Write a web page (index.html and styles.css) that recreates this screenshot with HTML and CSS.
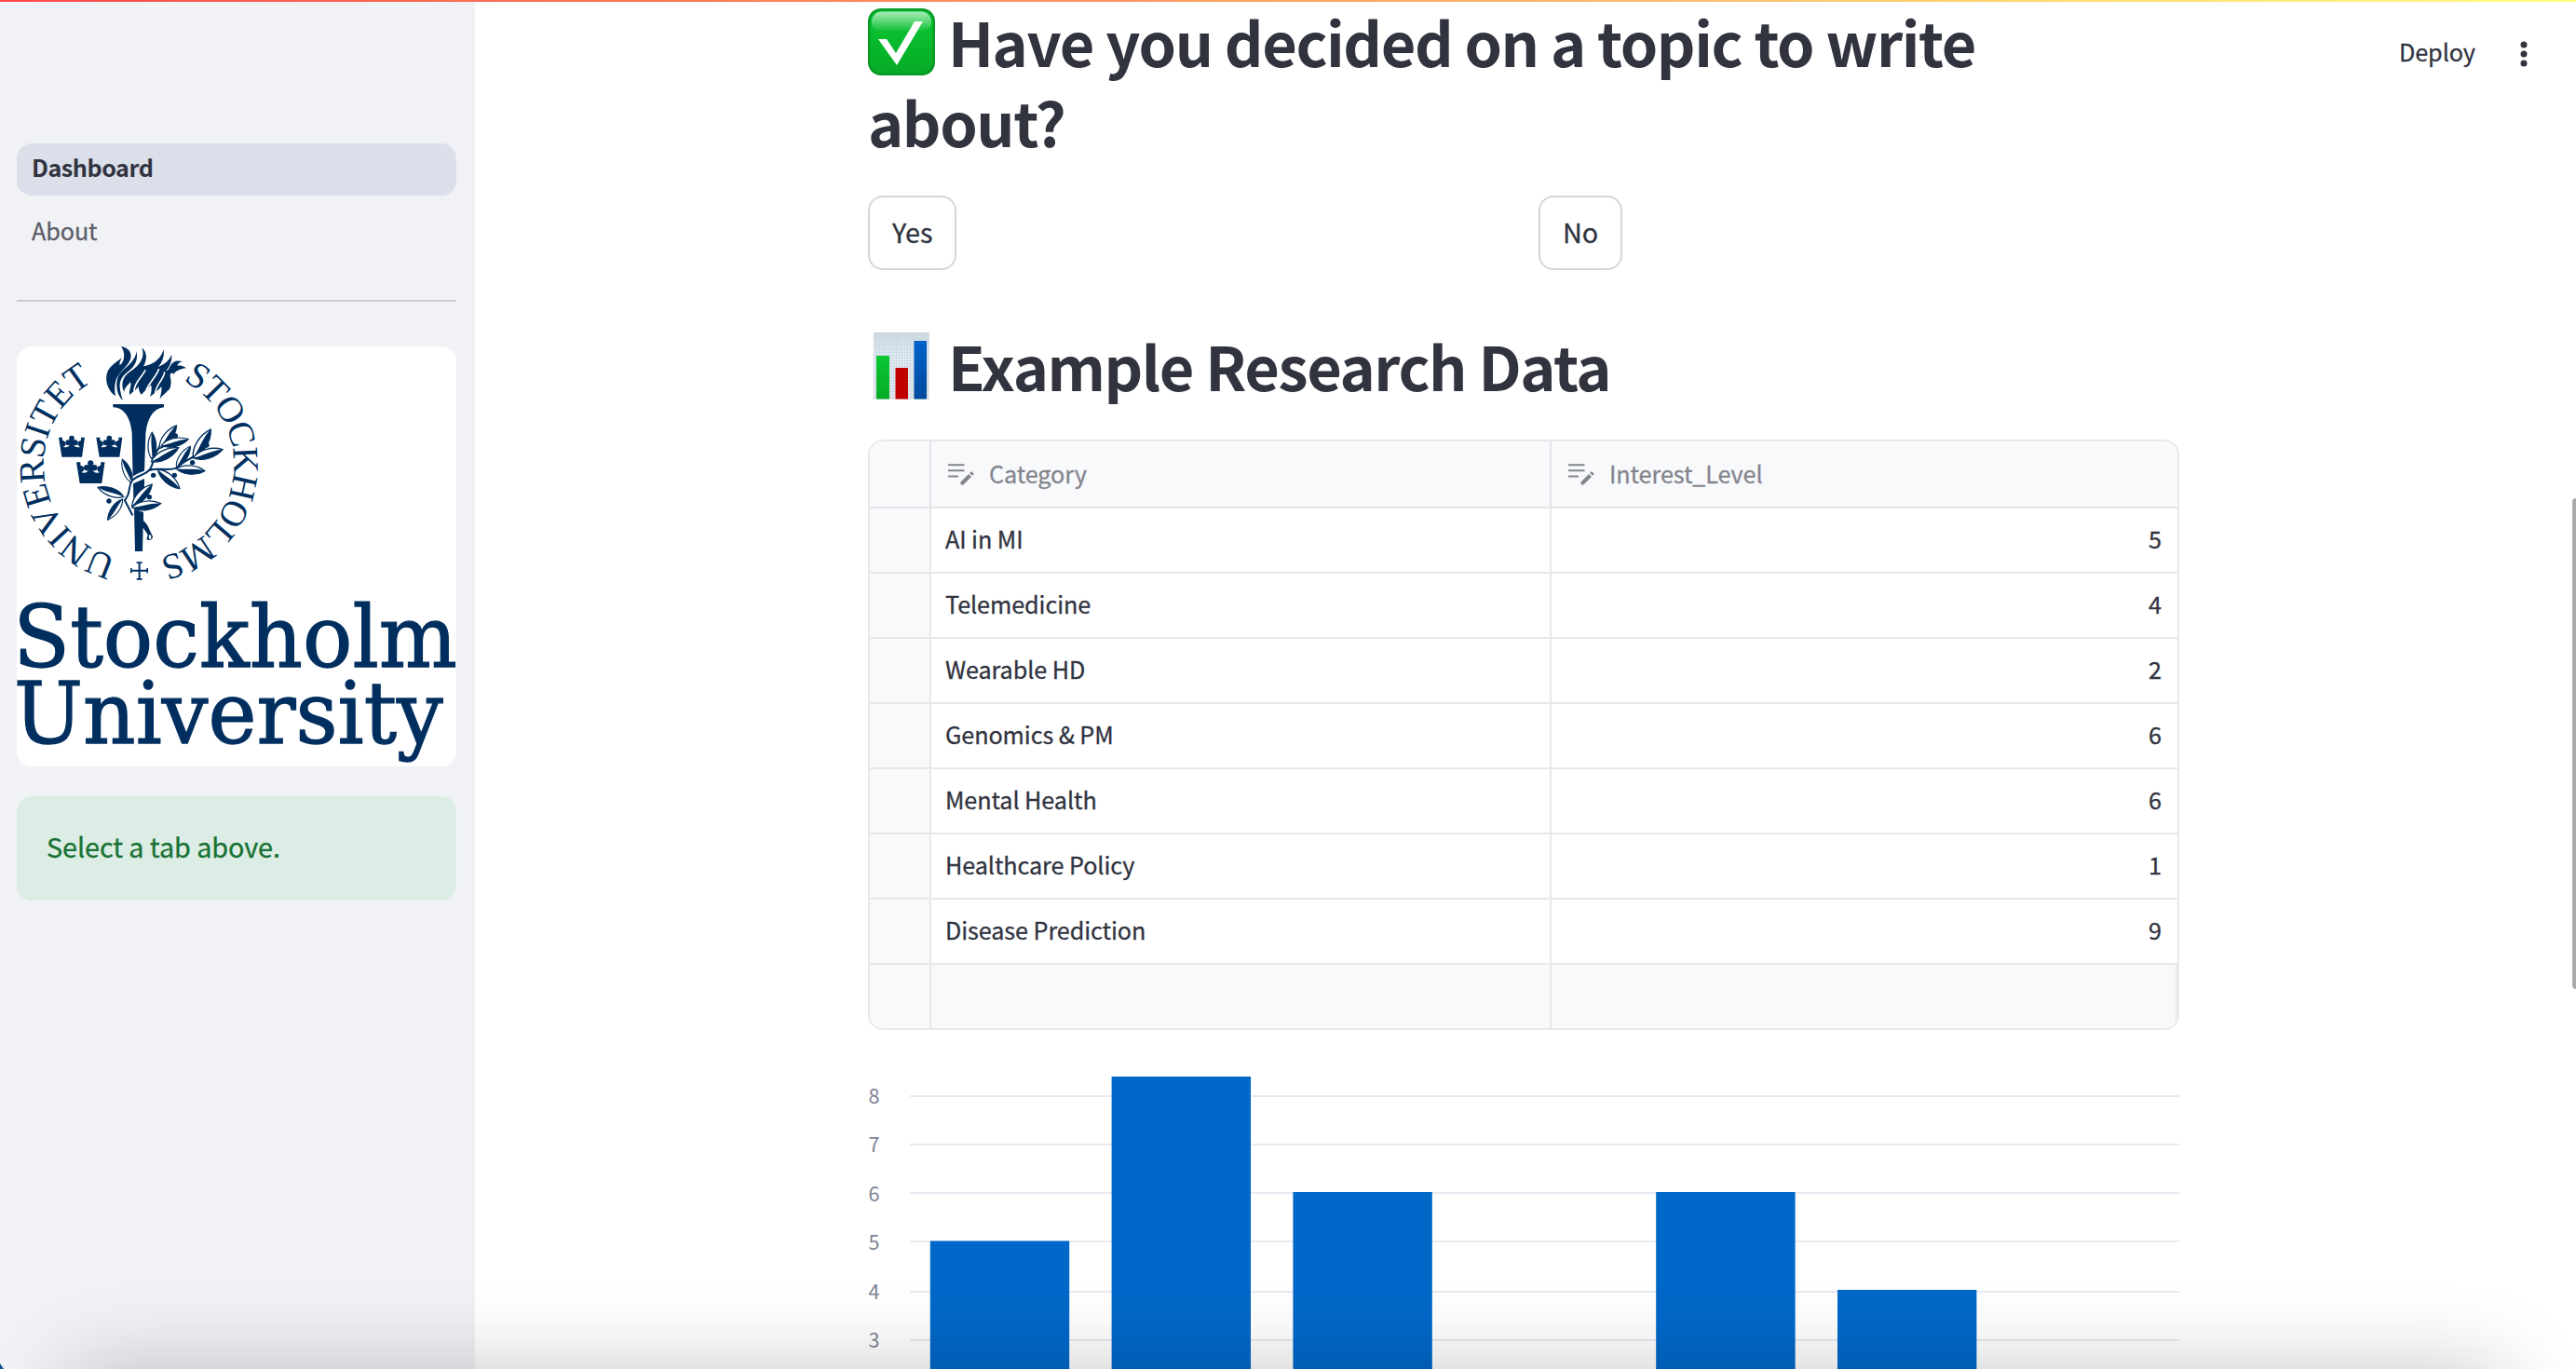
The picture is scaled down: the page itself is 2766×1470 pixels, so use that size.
FILE: index.html
```html
<!DOCTYPE html>
<html lang="en">
<head>
<meta charset="utf-8">
<title>Dashboard</title>
<link rel="stylesheet" href="styles.css">
</head>
<body>
<svg width="0" height="0" class="defs" aria-hidden="true">
  <defs>
    <symbol id="edit-note" viewBox="0 0 28 23">
      <path d="M0 1.300h17.500M0 7.300h17.500M0 13.400h11" fill="none" stroke="currentColor" stroke-width="2"/>
      <path d="M13.500 22.500v-2.900l8.600-8.600 2.900 2.900-8.600 8.600zM23.200 9.900l1.300-1.300q.5-.5 1 0l1.900 1.900q.5.500 0 1l-1.300 1.300z" fill="currentColor"/>
    </symbol>
    <g id="leaf">
      <path d="M0 0C25-20 70-20 100 0C70 20 25 20 0 0Z" fill="#fff" stroke="#002f5f" stroke-width="4"/>
      <path d="M2 0C30 2 70-8 100 0C70 20 25 20 2 0Z" fill="#002f5f"/>
    </g>
    <g id="crown" fill="#002f5f">
      <path d="M0 5H12V15C24 16 26 30 14 35C24 39 34 36 36 28H48C50 36 60 39 70 35C58 30 60 16 72 15V5H84L75 68H10Z"/>
      <circle cx="42" cy="8" r="8.500"/><circle cx="31" cy="22" r="9"/><circle cx="53" cy="22" r="9"/>
      <circle cx="14" cy="26" r="8"/><circle cx="70" cy="26" r="8"/><path d="M37 12h10v22H37z"/>
    </g>
    <linearGradient id="green" x1="0" y1="0" x2="0" y2="1"><stop offset="0" stop-color="#08c833"/><stop offset="1" stop-color="#08ab26"/></linearGradient>
    <linearGradient id="gloss" x1="0" y1="0" x2="0" y2="1"><stop offset="0" stop-color="#fff" stop-opacity=".65"/><stop offset="1" stop-color="#fff" stop-opacity="0"/></linearGradient>
    <linearGradient id="blue" x1="0" y1="0" x2="0" y2="1"><stop offset="0" stop-color="#0062cc"/><stop offset="1" stop-color="#004a9c"/></linearGradient>
    <linearGradient id="paper" x1="0" y1="0" x2="0" y2="1"><stop offset="0" stop-color="#d3dbe1"/><stop offset=".3" stop-color="#e0ebf3"/><stop offset="1" stop-color="#e6e8ea"/></linearGradient>
    <pattern id="mesh" width="3" height="3" patternUnits="userSpaceOnUse"><path d="M0 .5h3M.5 0v3" stroke="#b9cbd9" stroke-opacity=".4" stroke-width="1"/></pattern>
  </defs>
</svg>

<div class="app">
  <aside class="sidebar">
    <nav class="nav">
      <a class="nav-item active">Dashboard</a>
      <a class="nav-item">About</a>
    </nav>
    <hr class="rule">
    <svg class="logo" viewBox="54 66 1416 1353" role="img" aria-label="Stockholm University">
      <defs>
        <path id="ring" d="M447 753A306 306 0 0 1 447 141A306 306 0 0 1 447 753"/>
        <path id="ring-right" d="M447 141A306 306 0 0 1 447 753"/>
      </defs>
      <g class="seal">
        <text><textPath href="#ring" startOffset="72" textLength="735" lengthAdjust="spacing">UNIVERSITET</textPath></text>
        <text><textPath href="#ring-right" startOffset="148" textLength="746" lengthAdjust="spacing">STOCKHOLMS</textPath></text>
      </g>
      <g fill="#002f5f">
        <path d="M390 66C420 70 430 95 415 118C400 140 378 155 372 180C368 200 370 212 372 226C350 210 338 180 344 155C350 130 372 120 392 102C386 115 384 122 386 126C400 118 406 88 390 66Z"/>
        <path d="M440 82C445 110 435 130 415 145C395 160 385 175 386 195C387 215 392 228 396 240C378 225 372 195 378 170C385 145 410 135 425 115C433 104 438 95 440 82Z"/>
        <path d="M457 70C475 85 474 110 462 130C500 125 520 100 527 76C530 100 522 118 510 132C530 122 545 112 553 92C555 115 545 130 535 145C548 140 545 125 560 116C570 110 580 113 588 114C575 118 572 124 572 128C582 126 590 128 600 136C582 138 565 145 560 155C552 148 548 152 548 162C552 178 552 195 545 205C535 215 525 222 515 235C518 220 522 205 520 195C512 205 500 215 483 228C488 215 490 200 486 188C475 205 462 212 455 222C450 212 445 205 447 195C438 205 425 215 418 222C414 205 425 195 420 180C415 190 402 195 400 212C388 190 395 165 415 150C445 132 470 105 457 70Z"/>
        <path d="M364 252H528V262C490 266 472 305 469 355L465 475L428 500L425 345C420 295 400 263 364 262Z"/>
        <path d="M429 508L465 492V520L430 560ZM432 590L462 600V627C478 640 480 655 492 678C492 690 480 692 472 688L476 672L461 650L459 726H435Z"/>
        <path d="M440 760H458V765H452V785H472V780H477V796H472V791H452V813H458V818H440V813H446V791H425V796H420V780H425V785H446V765H440Z"/>
        <use href="#crown" x="189" y="354"/><use href="#crown" x="310" y="354"/>
        <use href="#crown" transform="translate(246 433) scale(1.09)"/>
      </g>
      <g fill="none" stroke="#fff" stroke-width="5">
        <path d="M466 226C468 190 502 170 512 138M500 222C498 190 530 172 530 148M432 210C432 180 462 160 468 142"/>
      </g>
      <ellipse cx="483" cy="680" rx="4" ry="7" fill="#fff"/>
      <g fill="none" stroke-linecap="round">
        <path d="M402 562L412 545C420 520 417 508 424 500C440 480 465 482 480 465" stroke="#fff" stroke-width="17"/>
        <path d="M426 608L402 562L412 545C420 520 417 508 424 500C440 480 465 482 480 465C492 455 492 435 497 420C505 400 512 392 520 380M480 465C510 455 540 468 568 458C590 436 610 430 628 418" stroke="#002f5f" stroke-width="6"/>
      </g>
      <use href="#leaf" transform="translate(490 430) rotate(-90) scale(.87)"/>
      <use href="#leaf" transform="translate(513 395) rotate(-53.300) scale(.93)"/>
      <use href="#leaf" transform="translate(520 385) rotate(-13) scale(.89)"/>
      <use href="#leaf" transform="translate(487 437) rotate(-27) scale(.99)"/>
      <use href="#leaf" transform="translate(622 425) rotate(-58.200) scale(1.08)"/>
      <use href="#leaf" transform="translate(622 425) rotate(-15.900) scale(.99)"/>
      <use href="#leaf" transform="translate(568 455) rotate(-56) scale(.81)"/>
      <use href="#leaf" transform="translate(568 460) rotate(4.400) scale(.92)"/>
      <use href="#leaf" transform="translate(508 462) rotate(41) scale(.94)"/>
      <use href="#leaf" transform="translate(424 505) rotate(-111.800) scale(.81)"/>
      <use href="#leaf" transform="translate(398 550) rotate(-160) scale(.88)"/>
      <use href="#leaf" transform="translate(395 558) rotate(126) scale(.82)"/>
      <use href="#leaf" transform="translate(425 580) rotate(-47) scale(.95)"/>
      <use href="#leaf" transform="translate(425 585) rotate(-8) scale(.94)"/>
      <g fill="#002f5f">
        <circle cx="565" cy="354" r="8"/><circle cx="666" cy="384" r="8"/><circle cx="620" cy="440" r="8"/><circle cx="562" cy="481" r="8"/>
        <circle cx="494" cy="481" r="8"/><circle cx="481" cy="551" r="8"/><circle cx="351" cy="564" r="8"/>
      </g>
      <g class="wordmark">
        <text x="43" y="1098" textLength="1430" lengthAdjust="spacingAndGlyphs">Stockholm</text>
        <text x="45" y="1344" textLength="1382" lengthAdjust="spacingAndGlyphs">University</text>
      </g>
    </svg>
    <div class="alert">Select a tab above.</div>
  </aside>

  <main class="main">
    <h1 class="heading first"><svg class="emoji" viewBox="0 0 72 72"><rect width="72" height="72" rx="14" fill="#079a26"/><rect x="2.500" y="2.500" width="67" height="67" rx="12" fill="url(#green)"/><rect x="4" y="3.500" width="64" height="22" rx="11" fill="url(#gloss)"/><path d="M11 33H20L30 48L50 14H59L31 61Z" fill="#fff"/></svg><span>Have you decided on a topic to write</span><br><span>about?</span></h1>
    <div class="choices">
      <div><button class="button">Yes</button></div>
      <div><button class="button">No</button></div>
    </div>
    <h1 class="heading second"><svg class="emoji" viewBox="0 0 72 72"><rect x="6" width="60" height="72" fill="url(#paper)"/><rect x="6" width="60" height="72" fill="url(#mesh)"/><rect x="9" y="25" width="14" height="46.500" fill="url(#green)"/><rect x="29.500" y="38" width="13.500" height="33.500" fill="#c00000"/><rect x="49.500" y="9" width="13.500" height="62.500" fill="url(#blue)"/></svg><span>Example Research Data</span></h1>

    <div class="table">
      <div class="row head"><div></div><div><svg class="edit"><use href="#edit-note"/></svg><span>Category</span></div><div><svg class="edit"><use href="#edit-note"/></svg><span>Interest_Level</span></div></div>
      <div class="row"><div></div><div>AI in MI</div><div>5</div></div>
      <div class="row"><div></div><div>Telemedicine</div><div>4</div></div>
      <div class="row"><div></div><div>Wearable HD</div><div>2</div></div>
      <div class="row"><div></div><div>Genomics &amp; PM</div><div>6</div></div>
      <div class="row"><div></div><div>Mental Health</div><div>6</div></div>
      <div class="row"><div></div><div>Healthcare Policy</div><div>1</div></div>
      <div class="row"><div></div><div>Disease Prediction</div><div>9</div></div>
      <div class="row blank"><div></div><div></div><div></div></div>
    </div>

    <svg class="chart" viewBox="932 1150 1408 320">
      <path d="M977 1177H2340M977 1229H2340M977 1281H2340M977 1333H2340M977 1387H2340M977 1439H2340" stroke="#e6eaf1" stroke-width="2"/>
      <g class="ticks">
        <text x="932.500" y="1185">8</text><text x="932.500" y="1237">7</text><text x="932.500" y="1290">6</text>
        <text x="932.500" y="1342">5</text><text x="932.500" y="1395">4</text><text x="932.500" y="1447">3</text>
      </g>
      <g fill="#0068c9">
        <rect x="998.800" y="1332.500" width="149.400" height="140"/>
        <rect x="1193.600" y="1156" width="149.400" height="320"/>
        <rect x="1388.400" y="1280" width="149.400" height="190"/>
        <rect x="1778.200" y="1280" width="149.400" height="190"/>
        <rect x="1973" y="1385" width="149.400" height="90"/>
      </g>
    </svg>
  </main>

  <header class="toolbar">
    <span>Deploy</span>
    <svg class="dots" viewBox="0 0 8 28"><circle cx="4" cy="4" r="3.500"/><circle cx="4" cy="14" r="3.500"/><circle cx="4" cy="24" r="3.500"/></svg>
  </header>
  <div class="decoration"></div>
  <div class="scroll-thumb"></div>
  <div class="dock-shadow"></div>
  <div class="corner"></div>
</div>
</body>
</html>
```
FILE: styles.css
```css
* { box-sizing: border-box; }
body {
  margin: 0;
  width: 2766px;
  height: 1470px;
  overflow: hidden;
  background: #fff;
  color: #31333f;
  font-family: "Noto Sans CJK SC", "Noto Sans", sans-serif;
  font-size: 28.800px;
  letter-spacing: -.080px;
  -webkit-text-stroke: .300px currentColor;
}
svg { -webkit-text-stroke: 0; letter-spacing: 0; }
.defs { position: absolute; }
.app { position: relative; display: flex; width: 2766px; height: 1470px; overflow: hidden; }

.sidebar { width: 510px; height: 1470px; padding: 154px 20px 0 18px; background: #f0f2f6; }
.nav { display: flex; flex-direction: column; gap: 12px; }
.nav-item {
  height: 56px; padding-left: 16px; border-radius: 16px;
  font-size: 25.200px; line-height: 50px; color: #5b5d67;
}
.nav-item.active { background: #dadfea; color: #31333f; font-weight: 700; letter-spacing: -.500px; -webkit-text-stroke: 0; }
.rule { height: 2px; margin: 44px 0 48px; border: 0; background: #c9cbcf; }
.logo { display: block; width: 472px; height: 451px; border-radius: 16px; background: #fff; overflow: visible; }
.seal { font-family: "Liberation Serif", serif; font-size: 117px; fill: #002f5f; }
.wordmark { font-family: "DejaVu Serif", serif; font-size: 276px; fill: #002f5f; stroke: #002f5f; stroke-width: 4px; }
.alert {
  height: 112px; margin-top: 32px; padding-left: 32px; border-radius: 16px;
  background: #dcede5; color: #177233; line-height: 108px;
}

.main { width: 1408px; margin-left: 422px; padding-top: 1px; }
.heading {
  margin: 0; font-size: 64.800px; line-height: 86.400px; font-weight: 700; white-space: nowrap;
  letter-spacing: -1.430px; -webkit-text-stroke: 0;
}
.emoji { width: 72px; height: 72px; margin-right: 14px; vertical-align: -9px; }
.first { height: 209px; }
.choices { display: grid; grid-template-columns: 1fr 1fr; column-gap: 32px; height: 139px; }
.button {
  display: block; height: 80px; padding: 0 24px; border: 2px solid #d6d6d9; border-radius: 16px;
  background: #fff; color: #31333f; font: inherit; line-height: 72px; padding-bottom: 2px;
}
.second { height: 123px; }

.table {
  height: 634px; border: 2px solid #e8e8ea; border-radius: 16px; overflow: hidden;
  font-size: 25.200px; line-height: 64px;
}
.row { display: grid; grid-template-columns: 66px 666px 1fr; height: 70px; border-bottom: 2px solid #e8e8ea; }
.row > div { padding-left: 15px; border-right: 2px solid #e8e8ea; }
.row > div:first-child { background: #f8f9fb; }
.row > div:last-child { padding-right: 17px; border-right: 0; text-align: right; }
.row.head { height: 72px; background: #f8f9fb; color: #83858d; border-color: #e3e4e8; }
.row.head > div { display: flex; align-items: center; padding-left: 18px; border-color: #e3e4e8; }
.row.head span { padding-bottom: 2px; }
.edit { width: 28px; height: 23px; margin-right: 16px; }
.row.blank { border-bottom: 0; background: #f8f9fb; }
.row.blank > div:last-child { border-right: 2px solid #e6eaf1; }

.chart { display: block; width: 1408px; height: 320px; margin-top: 44px; }
.ticks { font-size: 21.600px; fill: #808495; }

.toolbar { position: absolute; top: 27px; left: 2576px; display: flex; gap: 48px; font-size: 25.200px; line-height: 56px; }
.dots { width: 8px; height: 28px; margin-top: 17px; fill: #31333f; }
.decoration { position: absolute; top: 0; left: 0; width: 2766px; height: 2px; background: linear-gradient(90deg, #ff4b4b, #fffd80); }
.scroll-thumb { position: absolute; top: 535px; left: 2762px; width: 8px; height: 527px; border-radius: 4px; background: #a9a9ae; }
.dock-shadow { position: absolute; top: 1474px; left: 76px; width: 2612px; height: 400px; box-shadow: 0 0 88px rgba(0, 0, 0, .24); }
.corner { position: absolute; left: 0; bottom: 0; width: 4px; height: 6px; background: #0b4f94; clip-path: polygon(0 0, 100% 100%, 0 100%); }
```
